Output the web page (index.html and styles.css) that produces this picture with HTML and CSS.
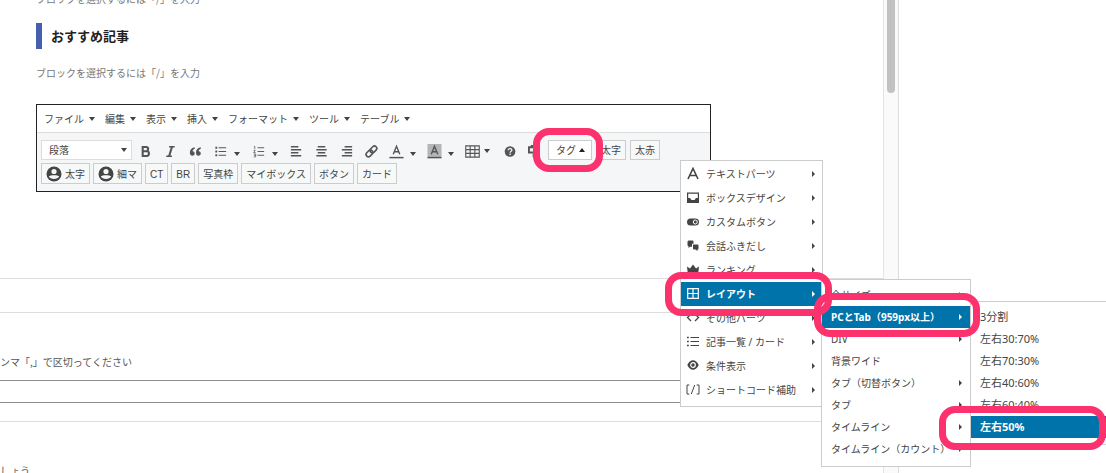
FILE: index.html
```html
<!DOCTYPE html>
<html lang="ja">
<head>
<meta charset="utf-8">
<title>おすすめ記事</title>
<link rel="stylesheet" href="styles.css">
</head>
<body>
<div class="app">
  <main class="content">
    <div class="blocks">
      <p class="placeholder">ブロックを選択するには「/」を入力</p>
      <h2 class="heading">おすすめ記事</h2>
      <p class="placeholder">ブロックを選択するには「/」を入力</p>
      <section class="classic">
        <nav class="menubar">
          <button class="menubar-item">ファイル<i class="caret"></i></button>
          <button class="menubar-item">編集<i class="caret"></i></button>
          <button class="menubar-item">表示<i class="caret"></i></button>
          <button class="menubar-item">挿入<i class="caret"></i></button>
          <button class="menubar-item">フォーマット<i class="caret"></i></button>
          <button class="menubar-item">ツール<i class="caret"></i></button>
          <button class="menubar-item">テーブル<i class="caret"></i></button>
        </nav>
        <div class="toolbar">
          <div class="row tools">
            <div class="format"><select aria-label="書式"><option>段落</option></select><i class="caret"></i></div>
            <button class="tool" aria-label="太字"><svg viewBox="0 0 16 16"><path fill="none" stroke="currentColor" stroke-width="2.2" d="M5 3.2h3.6a2.2 2.2 0 0 1 0 4.5H5zM5 7.7h4.2a2.5 2.5 0 0 1 0 5H5z"/></svg></button>
            <button class="tool" aria-label="斜体"><svg viewBox="0 0 16 16"><path fill="none" stroke="currentColor" stroke-width="1.5" d="M6.5 3h6M3.500 13h6"/><path stroke="currentColor" stroke-width="2.200" d="M9.600 3L6.500 13"/></svg></button>
            <button class="tool" aria-label="引用"><svg viewBox="0 0 16 16"><path fill="currentColor" d="M7 3.500C3.500 4.300 2 6.500 2 9.300c0 2 1.100 3.200 2.700 3.200 1.400 0 2.400-1 2.400-2.400S6.200 7.800 4.900 7.800c.1-1.300.8-2.200 2.300-2.800zM13.500 3.500c-3.500.8-5 3-5 5.800 0 2 1.100 3.200 2.700 3.200 1.400 0 2.400-1 2.400-2.400s-.9-2.300-2.200-2.300c.1-1.300.8-2.200 2.300-2.800z"/></svg></button>
            <button class="tool split" aria-label="番号なしリスト"><svg viewBox="0 0 16 16"><path stroke="currentColor" stroke-width="1.200" d="M6 4h8M6 8h8M6 12h8"/><path stroke="currentColor" stroke-width="2" d="M2.500 4h2M2.500 8h2M2.500 12h2"/></svg><i class="caret"></i></button>
            <button class="tool split" aria-label="番号付きリスト"><svg viewBox="0 0 16 16"><path stroke="currentColor" stroke-width="1" d="M7 4h7M7 8h7M7 12h7"/><path fill="none" stroke="currentColor" stroke-width=".8" d="M3 3l1-.6V5.500M2.800 6.800h1.700L2.800 9.200H5M2.800 10.700H5v3H2.800M3.300 12.200H5"/></svg><i class="caret"></i></button>
            <button class="tool" aria-label="左揃え"><svg viewBox="0 0 16 16"><path stroke="currentColor" stroke-width="1.600" d="M2 3h8M2 6.200h11M2 9.400h8M2 12.600h11"/></svg></button>
            <button class="tool" aria-label="中央揃え"><svg viewBox="0 0 16 16"><path stroke="currentColor" stroke-width="1.600" d="M4 3h8M2.500 6.200h11M4 9.400h8M2.500 12.600h11"/></svg></button>
            <button class="tool" aria-label="右揃え"><svg viewBox="0 0 16 16"><path stroke="currentColor" stroke-width="1.600" d="M6 3h8M3 6.200h11M6 9.400h8M3 12.600h11"/></svg></button>
            <button class="tool" aria-label="リンク"><svg viewBox="0 0 16 16"><g fill="none" stroke="currentColor" stroke-width="1.700" transform="rotate(-45 8 8)"><rect x="1" y="5.400" width="8" height="5" rx="2.500"/><rect x="7" y="5.400" width="8" height="5" rx="2.500"/></g></svg></button>
            <button class="tool split" aria-label="文字色"><svg viewBox="0 0 16 16"><path fill="none" stroke="currentColor" stroke-width="1.500" d="M4.500 11L8 2.500l3.500 8.500M5.700 8.200h4.600"/><path stroke="currentColor" stroke-width="1.600" d="M.5 14.500h15"/></svg><i class="caret"></i></button>
            <button class="tool split" aria-label="背景色"><svg viewBox="0 0 16 16"><path fill="#b5b5b5" d="M.5 0h15v14H.5z"/><path fill="none" stroke="currentColor" stroke-width="1.500" d="M4.500 11L8 2.500l3.500 8.500M5.700 8.200h4.600"/><path stroke="currentColor" stroke-width="1.600" d="M.5 14.500h15"/></svg><i class="caret"></i></button>
            <button class="tool split" aria-label="テーブル"><svg viewBox="0 0 16 16"><path fill="none" stroke="currentColor" stroke-width="1.200" d="M.8 2h14.400v12H.8zM.8 6h14.400M.8 10h14.400M5.500 2v12M10.500 2v12"/></svg><i class="caret near"></i></button>
            <button class="tool" aria-label="ヘルプ"><svg viewBox="0 0 16 16"><circle cx="7.500" cy="8" r="5.700" fill="currentColor"/><path fill="none" stroke="#f5f6f7" stroke-width="1.400" d="M5.600 6.600c0-2.300 3.900-2.200 3.900 0 0 1.200-1.900 1.300-1.900 2.700M7.600 10.200v1.400"/></svg></button>
            <button class="tool" aria-label="メディア"><svg viewBox="0 0 16 16"><path fill="none" stroke="currentColor" stroke-width="2" d="M8 9H1V3.500h7"/><path fill="currentColor" d="M3 1h4v3H3zM5 10.500h4v3.500H5z"/></svg></button>
            <button class="text-btn tag">タグ<i class="caret up"></i></button>
            <button class="text-btn">太字</button>
            <button class="text-btn">太赤</button>
          </div>
          <div class="row">
            <button class="text-btn"><svg class="person" viewBox="0 0 16 16"><circle cx="8" cy="8" r="7.500" fill="currentColor"/><circle cx="8" cy="5.500" r="2.600" fill="#f5f6f7"/><path fill="#f5f6f7" d="M2.800 10.500c1.500-1.800 8.900-1.800 10.400 0-1.500 3.200-8.900 3.200-10.400 0z"/></svg>太字</button>
            <button class="text-btn"><svg class="person" viewBox="0 0 16 16"><circle cx="8" cy="8" r="7.500" fill="currentColor"/><circle cx="8" cy="5.500" r="2.600" fill="#f5f6f7"/><path fill="#f5f6f7" d="M2.800 10.500c1.500-1.800 8.900-1.800 10.400 0-1.500 3.200-8.900 3.200-10.400 0z"/></svg>細マ</button>
            <button class="text-btn latin">CT</button>
            <button class="text-btn latin">BR</button>
            <button class="text-btn">写真枠</button>
            <button class="text-btn">マイボックス</button>
            <button class="text-btn">ボタン</button>
            <button class="text-btn">カード</button>
          </div>
        </div>
      </section>
    </div>
    <div class="metabox-title"></div>
    <div class="metabox">
      <label class="hint" for="tags">ンマ「,」で区切ってください</label>
      <input class="field" id="tags" type="text">
    </div>
    <div class="metabox"><p class="hint">しょう</p></div>
  </main>
  <div class="scroll"><div class="thumb"></div></div>
  <aside class="side"></aside>

  <div class="menu menu-tags">
    <button class="item"><svg viewBox="0 0 14 14"><path fill="none" stroke="currentColor" stroke-width="1.600" d="M2 12L7 1.500 12 12M3.700 8.500h6.600"/></svg><span>テキストパーツ</span><i class="arrow"></i></button>
    <button class="item"><svg viewBox="0 0 14 14"><path fill="none" stroke="currentColor" stroke-width="1.200" d="M1.600 2.100h10.800v9.300H1.600z"/><path fill="currentColor" d="M1.500 7H4l1.500 2h3L10 7h2.500v4.500h-11z"/></svg><span>ボックスデザイン</span><i class="arrow"></i></button>
    <button class="item"><svg viewBox="0 0 14 14"><rect x="1" y="3.500" width="12" height="7" rx="3.500" fill="currentColor"/><circle cx="9.300" cy="7" r="2" fill="none" stroke="#fff"/></svg><span>カスタムボタン</span><i class="arrow"></i></button>
    <button class="item"><svg viewBox="0 0 14 14"><path fill="currentColor" d="M2.500 1.500h4a1 1 0 0 1 1 1V4.700H6v3H4L2.500 9V7.300L1.500 6.500v-4zM7 5.500h4.500a1 1 0 0 1 1 1v3a1 1 0 0 1-1 1V12L9.500 10.500H8a1 1 0 0 1-1-1z"/></svg><span>会話ふきだし</span><i class="arrow"></i></button>
    <button class="item"><svg viewBox="0 0 14 14"><path fill="currentColor" d="M1 3.500L4 5.500l3-4 3 4 3-2-1 9H2z"/></svg><span>ランキング</span><i class="arrow"></i></button>
    <button class="item active"><svg viewBox="0 0 14 14"><path fill="none" stroke="currentColor" stroke-width="1.200" d="M1.700 1.700h10.600v9.600H1.700zM7 1.700v9.600M1.700 6.500h10.600"/></svg><span>レイアウト</span><i class="arrow"></i></button>
    <button class="item"><svg viewBox="0 0 14 14"><path fill="none" stroke="currentColor" stroke-width="1.300" d="M5 3L1.500 6.500 5 10M9 3l3.500 3.500L9 10"/></svg><span>その他パーツ</span><i class="arrow"></i></button>
    <button class="item"><svg viewBox="0 0 14 14"><path stroke="currentColor" stroke-width="1.200" d="M4.500 2.500H13M4.500 6.500H13M4.500 10.500H13"/><path stroke="currentColor" stroke-width="1.600" d="M1 2.500h1.800M1 6.500h1.800M1 10.500h1.800"/></svg><span>記事一覧 / カード</span><i class="arrow"></i></button>
    <button class="item"><svg viewBox="0 0 14 14"><path fill="currentColor" d="M1.300 6C4-.4 10 -.4 12.700 6 10 12.400 4 12.400 1.300 6z"/><circle cx="7" cy="6" r="2.300" fill="none" stroke="#fff" stroke-width="1.200"/></svg><span>条件表示</span><i class="arrow"></i></button>
    <button class="item"><svg viewBox="0 0 14 14"><path fill="none" stroke="currentColor" d="M3.300 2H1v9h2.300M10.700 2H13v9h-2.300M8.700 2L5.300 11"/></svg><span>ショートコード補助</span><i class="arrow"></i></button>
  </div>

  <div class="menu submenu menu-layout">
    <button class="item"><span>全サイズ</span><i class="arrow"></i></button>
    <button class="item active"><span>PCとTab（959px以上）</span><i class="arrow"></i></button>
    <button class="item"><span>DIV</span><i class="arrow"></i></button>
    <button class="item"><span>背景ワイド</span></button>
    <button class="item"><span>タブ（切替ボタン）</span><i class="arrow"></i></button>
    <button class="item"><span>タブ</span><i class="arrow"></i></button>
    <button class="item"><span>タイムライン</span><i class="arrow"></i></button>
    <button class="item"><span>タイムライン（カウント）</span><i class="arrow"></i></button>
  </div>

  <div class="menu submenu menu-split">
    <button class="item"><span>3分割</span></button>
    <button class="item"><span>左右30:70%</span></button>
    <button class="item"><span>左右70:30%</span></button>
    <button class="item"><span>左右40:60%</span></button>
    <button class="item"><span>左右60:40%</span></button>
    <button class="item active"><span>左右50%</span></button>
  </div>

  <div class="ring ring-tag"></div>
  <div class="ring ring-layout"></div>
  <div class="ring ring-pc"></div>
  <div class="ring ring-half"></div>
</div>
</body>
</html>
```
FILE: styles.css
```css
* {
  box-sizing: border-box;
}

body {
  margin: 0;
  background: #fff;
  color: #444;
  font: 10px/20px "Noto Sans", "Noto Sans CJK JP", sans-serif;
}

button {
  margin: 0;
  padding: 0;
  border: 0;
  background: none;
  color: inherit;
  font: inherit;
  white-space: nowrap;
}

svg {
  display: block;
  flex: none;
}

.app {
  position: relative;
  display: flex;
  height: 100vh;
  overflow: hidden;
}

.content {
  flex: 1;
  min-width: 0;
}

.scroll {
  width: 16px;
  padding: 0 3px;
  border-left: 1px solid #e4e4e4;
  border-right: 1px solid #dcdcdc;
  background: #fafafa;
}

.thumb {
  width: 8px;
  height: 93px;
  border-radius: 0 0 4px 4px;
  background: #c2c2c2;
}

.side {
  width: 207px;
}

/* Block editor */
.blocks {
  margin-top: -11px;
  padding: 0 172px 86px 36px;
}

.placeholder {
  margin: 0;
  color: #777;
  font-family: "Noto Sans CJK JP", sans-serif;
}

.heading {
  margin: 14px 0;
  padding-left: 9px;
  border-left: 6px solid #4660b0;
  color: #222;
  font: bold 13px/26px "Noto Sans CJK JP", sans-serif;
}

.classic {
  margin-top: 21px;
  border: 1px solid #222;
  font-family: "Noto Sans CJK JP", sans-serif;
}

.menubar {
  display: flex;
  gap: 10px;
  height: 28px;
  padding-left: 7px;
  border-bottom: 1px solid #dcdcdc;
}

.menubar-item {
  display: flex;
  align-items: center;
  gap: 5px;
}

.caret {
  flex: none;
  border: 3px solid transparent;
  border-top: 4px solid #444;
  border-bottom: 0;
}

.caret.up {
  border-top: 0;
  border-bottom: 4px solid #222;
}

.toolbar {
  display: flex;
  flex-direction: column;
  gap: 3px;
  padding: 7px 4px;
  background: #f5f6f7;
}

.row {
  display: flex;
  gap: 3px;
}

.tools {
  gap: 0;
}

.format {
  position: relative;
  width: 91px;
  margin-right: 1px;
}

.format select {
  display: block;
  width: 100%;
  height: 20px;
  padding: 0 7px;
  border: 1px solid #ddd;
  border-radius: 0;
  appearance: none;
  background: #fff;
  color: #444;
  font: inherit;
  line-height: 16px;
}

.format .caret {
  position: absolute;
  top: 8px;
  right: 5px;
}

.tool {
  display: flex;
  align-items: center;
  width: 25px;
  height: 20px;
  padding: 2px 0 0 5px;
  color: #555;
}

.tool svg {
  width: 15px;
  height: 15px;
}

.split {
  width: 38px;
  gap: 6px;
}

.split .caret {
  margin-top: 5px;
}

.split .near {
  margin: 0 0 0 -2px;
}

.text-btn {
  display: flex;
  align-items: center;
  gap: 3px;
  height: 21px;
  padding: 0 4px;
  border: 1px solid #ccc;
  background: #f7f8f8;
}

.tools .text-btn {
  height: 20px;
  margin-right: 4px;
}

.tools .tag {
  padding: 0 6px 0 7px;
  background: #fff;
}

.latin {
  padding-top: 3px;
  font-family: "Liberation Sans", sans-serif;
}

.person {
  width: 16px;
  height: 16px;
}

/* Meta boxes */
.metabox-title {
  height: 34px;
  border-top: 1px solid #ddd;
}

.metabox {
  padding-top: 39px;
  border-top: 1px solid #ddd;
}

.hint {
  display: block;
  margin: 0;
  color: #555;
  font-family: "Noto Sans CJK JP", sans-serif;
}

.field {
  display: block;
  width: 100%;
  height: 23px;
  margin: 8px 0 18px;
  border: 1px solid #8c8c8c;
  border-left: 0;
}

/* Menus */
.menu {
  position: absolute;
  display: flex;
  flex-direction: column;
  border: 1px solid #ccc;
  background: #fff;
}

.item {
  display: flex;
  align-items: center;
  height: 24px;
  padding: 0 7px 0 5px;
  gap: 6px;
  text-align: left;
}

.item span {
  flex: 1;
}

.item svg {
  width: 14px;
  height: 14px;
}

.item.active {
  background: #0073aa;
  color: #fff;
  font-weight: bold;
}

.arrow {
  flex: none;
  border: 3px solid transparent;
  border-left: 3px solid currentColor;
  border-right: 0;
}

.menu-tags {
  top: 160px;
  left: 680px;
  width: 143px;
  padding: 1px 0 4px;
}

.submenu {
  padding: 4px 0 6px;
}

.submenu .item {
  height: 22px;
  padding: 0 8px 0 9px;
}

.menu-layout {
  top: 279px;
  left: 821px;
  width: 150px;
}

.menu-split {
  top: 301px;
  left: 970px;
  width: 140px;
  font-size: 11px;
}

/* Highlight rings */
.ring {
  position: absolute;
  height: 44px;
  border: 7px solid #fc326f;
  border-radius: 16px;
}

.ring-tag {
  top: 128px;
  left: 533px;
  width: 70px;
}

.ring-layout {
  top: 272px;
  left: 665px;
  width: 167px;
}

.ring-pc {
  top: 293px;
  left: 814px;
  width: 166px;
}

.ring-half {
  top: 406px;
  left: 939px;
  width: 167px;
}
```
